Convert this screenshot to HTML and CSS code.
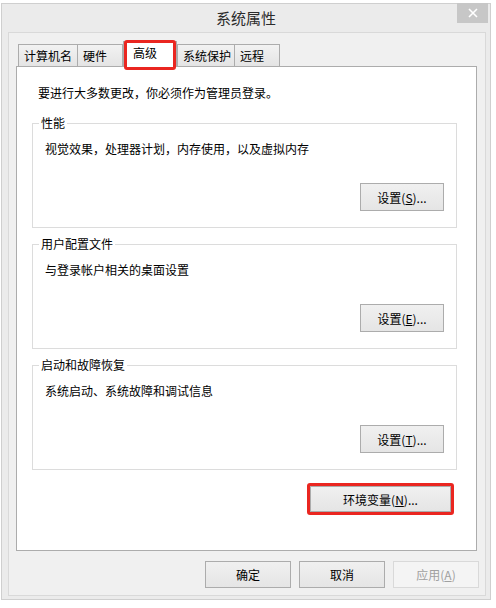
FILE: index.html
```html
<!DOCTYPE html>
<html lang="zh-CN">
<head>
  <meta charset="UTF-8" />
  <title>系统属性</title>
  <link rel="stylesheet" href="styles.css">
</head>
<body>
  <div class="window">
    <div class="titlebar">
      <span></span>
      <div class="title">系统属性</div>
      <button class="close" title="关闭">
        <svg width="10" height="10" viewBox="0 0 10 10">
          <path d="M1 1 L9 9 M9 1 L1 9" stroke="#fff" stroke-width="1.6" fill="none"/>
        </svg>
      </button>
    </div>

    <div class="client">
      <div class="tabs">
        <div class="tab t1">计算机名</div>
        <div class="tab t2">硬件</div>
        <div class="tab active">高级</div>
        <div class="tab t4">系统保护</div>
        <div class="tab t5">远程</div>
      </div>

      <div class="panel">
        <p class="note">要进行大多数更改，你必须作为管理员登录。</p>

        <div class="group">
          <div class="legend">性能</div>
          <p class="desc">视觉效果，处理器计划，内存使用，以及虚拟内存</p>
          <button class="btn">设置(<u>S</u>)...</button>
        </div>

        <div class="group">
          <div class="legend">用户配置文件</div>
          <p class="desc">与登录帐户相关的桌面设置</p>
          <button class="btn">设置(<u>E</u>)...</button>
        </div>

        <div class="group">
          <div class="legend">启动和故障恢复</div>
          <p class="desc">系统启动、系统故障和调试信息</p>
          <button class="btn">设置(<u>T</u>)...</button>
        </div>

        <div class="env-row">
          <button class="btn env">环境变量(<u>N</u>)...</button>
        </div>
      </div>

      <div class="footer">
        <button class="btn wide">确定</button>
        <button class="btn wide">取消</button>
        <button class="btn wide" disabled>应用(<u>A</u>)</button>
      </div>
    </div>
  </div>
</body>
</html>
```

FILE: styles.css
```css
body {
  margin: 0;
  background: #fff;
  font-family: "Noto Sans CJK SC", "Microsoft YaHei", sans-serif;
  font-size: 12px;
  color: #000;
}
.window {
  margin: 3px 0 0 1px;
  width: 490px;
  height: 597px;
  box-sizing: border-box;
  border: 1px solid #cfcfcf;
  background: #ebebeb;
  display: flex;
  flex-direction: column;
}
.titlebar {
  height: 28px;
  display: grid;
  grid-template-columns: 1fr auto 1fr;
  align-items: start;
}
.title {
  font-size: 15px;
  line-height: 27px;
  color: #2b2b2b;
}
.close {
  justify-self: end;
  width: 31px;
  height: 20px;
  margin: -1px 2px 0 0;
  padding: 0;
  border: none;
  background: #c7c7c7;
  display: flex;
  align-items: center;
  justify-content: center;
}
.client {
  flex: 1;
  margin: 0 4px 3px 6px;
  border: 1px solid #d9d9d9;
  background: #f0f0f0;
  display: flex;
  flex-direction: column;
}
.tabs {
  display: flex;
  align-items: flex-end;
  height: 25px;
  margin: 8px 0 0 9px;
}
.tab {
  height: 22px;
  box-sizing: border-box;
  border: 1px solid #acacac;
  border-bottom: none;
  background: linear-gradient(#f2f2f2, #e4e4e4);
  padding-left: 5px;
  line-height: 21px;
  margin-left: -1px;
}
.t1 { width: 60px; margin-left: 0; }
.t2 { width: 46px; }
.t4 { width: 58px; margin-left: 0; }
.t5 { width: 46px; }
.tab.active {
  width: 54px;
  height: 26px;
  margin: 0 0 -1px 0;
  padding-left: 9px;
  line-height: 22px;
  background: #fff;
  position: relative;
  z-index: 1;
}
.tab.active::after {
  content: "";
  position: absolute;
  left: 0;
  right: 0;
  top: -2px;
  bottom: -3px;
  border: 3px solid #ea2620;
  border-radius: 3px;
}
.panel {
  height: 485px;
  box-sizing: border-box;
  margin: 0 8px 0 7px;
  border: 1px solid #acacac;
  background: #fff;
  padding-top: 18px;
}
.note {
  margin: 0 0 0 21px;
  line-height: 16px;
}
.group {
  width: 425px;
  height: 105px;
  box-sizing: border-box;
  margin: 22px 0 0 15px;
  border: 1px solid #dcdcdc;
  display: flex;
  flex-direction: column;
}
.group + .group {
  margin-top: 16px;
}
.legend {
  align-self: flex-start;
  margin: -9px 0 0 6px;
  padding: 0 2px;
  background: #fff;
  line-height: 16px;
}
.desc {
  margin: 10px 0 0 12px;
  line-height: 16px;
}
.btn {
  height: 28px;
  width: 84px;
  padding: 0;
  font-family: inherit;
  font-size: 12px;
  color: #000;
  border: 1px solid #acacac;
  background: linear-gradient(#f0f0f0, #e5e5e5);
  border-radius: 0;
}
.group .btn {
  margin: auto 12px 16px 0;
  align-self: flex-end;
}
.env-row {
  display: flex;
  justify-content: flex-end;
  margin-top: 16px;
}
.btn.env {
  width: 141px;
  height: 26px;
  margin-right: 25px;
  position: relative;
}
.btn.env::after {
  content: "";
  position: absolute;
  left: -4px;
  right: -4px;
  top: -4px;
  bottom: -4px;
  border: 3px solid #ea2620;
  border-radius: 3px;
}
.footer {
  display: flex;
  justify-content: flex-end;
  gap: 8px;
  margin: 10px 6px 0 0;
}
.btn.wide {
  width: 86px;
  height: 27px;
}
.btn:disabled {
  color: #a0a0a0;
  border-color: #d9d9d9;
  background: #f4f4f4;
}
```
